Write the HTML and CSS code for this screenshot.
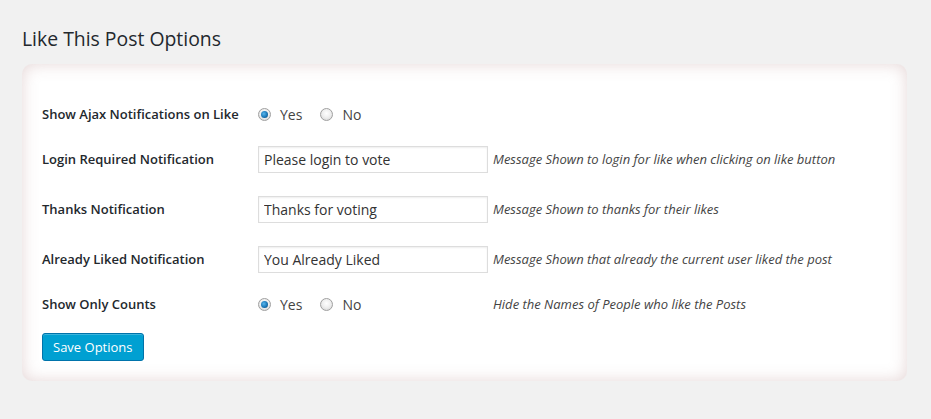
FILE: index.html
```html
<!DOCTYPE html>
<html>
<head>
<meta charset="utf-8">
<link rel="stylesheet" href="styles.css">
</head>
<body>
<div class="wrap">
  <h2 class="title">Like This Post Options</h2>
  <form class="panel">
    <div class="grid">
      <div class="row radio-row">
        <div class="label">Show Ajax Notifications on Like</div>
        <div class="field">
          <label class="opt"><span class="radio checked"></span>Yes</label>
          <label class="opt"><span class="radio"></span>No</label>
        </div>
        <div class="desc"></div>
      </div>
      <div class="row input-row">
        <div class="label">Login Required Notification</div>
        <div class="field"><input class="text" type="text" value="Please login to vote"></div>
        <div class="desc">Message Shown to login for like when clicking on like button</div>
      </div>
      <div class="row input-row">
        <div class="label">Thanks Notification</div>
        <div class="field"><input class="text" type="text" value="Thanks for voting"></div>
        <div class="desc">Message Shown to thanks for their likes</div>
      </div>
      <div class="row input-row">
        <div class="label">Already Liked Notification</div>
        <div class="field"><input class="text" type="text" value="You Already Liked"></div>
        <div class="desc">Message Shown that already the current user liked the post</div>
      </div>
      <div class="row radio-row">
        <div class="label">Show Only Counts</div>
        <div class="field">
          <label class="opt"><span class="radio checked"></span>Yes</label>
          <label class="opt"><span class="radio"></span>No</label>
        </div>
        <div class="desc">Hide the Names of People who like the Posts</div>
      </div>
    </div>
    <button class="btn" type="button">Save Options</button>
  </form>
</div>
</body>
</html>
```

FILE: styles.css
```css
* { box-sizing: border-box; }
html, body { margin: 0; padding: 0; }
body {
  background: #f1f1f1;
  font-family: "Open Sans", "Liberation Sans", sans-serif;
  color: #444;
  font-size: 13px;
}
.wrap {
  padding: 26px 24px 0 22px;
}
.title {
  margin: 0 0 12px 0;
  font-size: 19.4px;
  font-weight: 400;
  line-height: 26px;
  color: #23282d;
}
.panel {
  background: #fff;
  border-radius: 10px;
  box-shadow: inset 0 0 16px rgba(170, 120, 120, 0.3);
  padding: 30px 20px 20px 20px;
}
.row {
  display: grid;
  grid-template-columns: 216px 235px 1fr;
  align-items: center;
}
.radio-row { height: 40px; }
.input-row { height: 50px; }
.label {
  font-weight: 600;
  color: #23282d;
  font-size: 13px;
}
.desc {
  font-style: italic;
  color: #444;
  font-size: 13px;
}
.field { display: flex; align-items: center; }
.opt {
  display: inline-flex;
  align-items: center;
  font-size: 14px;
  color: #444;
  margin-right: 18px;
}
.radio {
  width: 13px;
  height: 13px;
  border-radius: 50%;
  border: 1px solid #a0a0a0;
  background: radial-gradient(circle at 50% 40%, #ffffff 0%, #eeeeee 50%, #cfcfcf 100%);
  margin-right: 9px;
  position: relative;
}
.radio.checked::after {
  content: "";
  position: absolute;
  left: 2px;
  top: 2px;
  width: 7px;
  height: 7px;
  border-radius: 50%;
  background: radial-gradient(circle at 40% 40%, #5ab7ec 0%, #1a77b8 55%, #0d3f66 100%);
}
.text {
  width: 230px;
  height: 27px;
  border: 1px solid #dddddd;
  box-shadow: inset 0 1px 2px rgba(0, 0, 0, 0.07);
  background: #fff;
  padding: 0 5px;
  font-family: "Open Sans", "Liberation Sans", sans-serif;
  font-size: 14px;
  color: #333;
  margin: 0;
}
.btn {
  margin-top: 9px;
  height: 28px;
  padding: 0 10px 1px 10px;
  background: #00a0d2;
  border: 1px solid #0073aa;
  border-radius: 3px;
  color: #fff;
  font-family: "Open Sans", "Liberation Sans", sans-serif;
  font-size: 13px;
  box-shadow: inset 0 1px 0 rgba(120, 200, 230, 0.5);
}
```
